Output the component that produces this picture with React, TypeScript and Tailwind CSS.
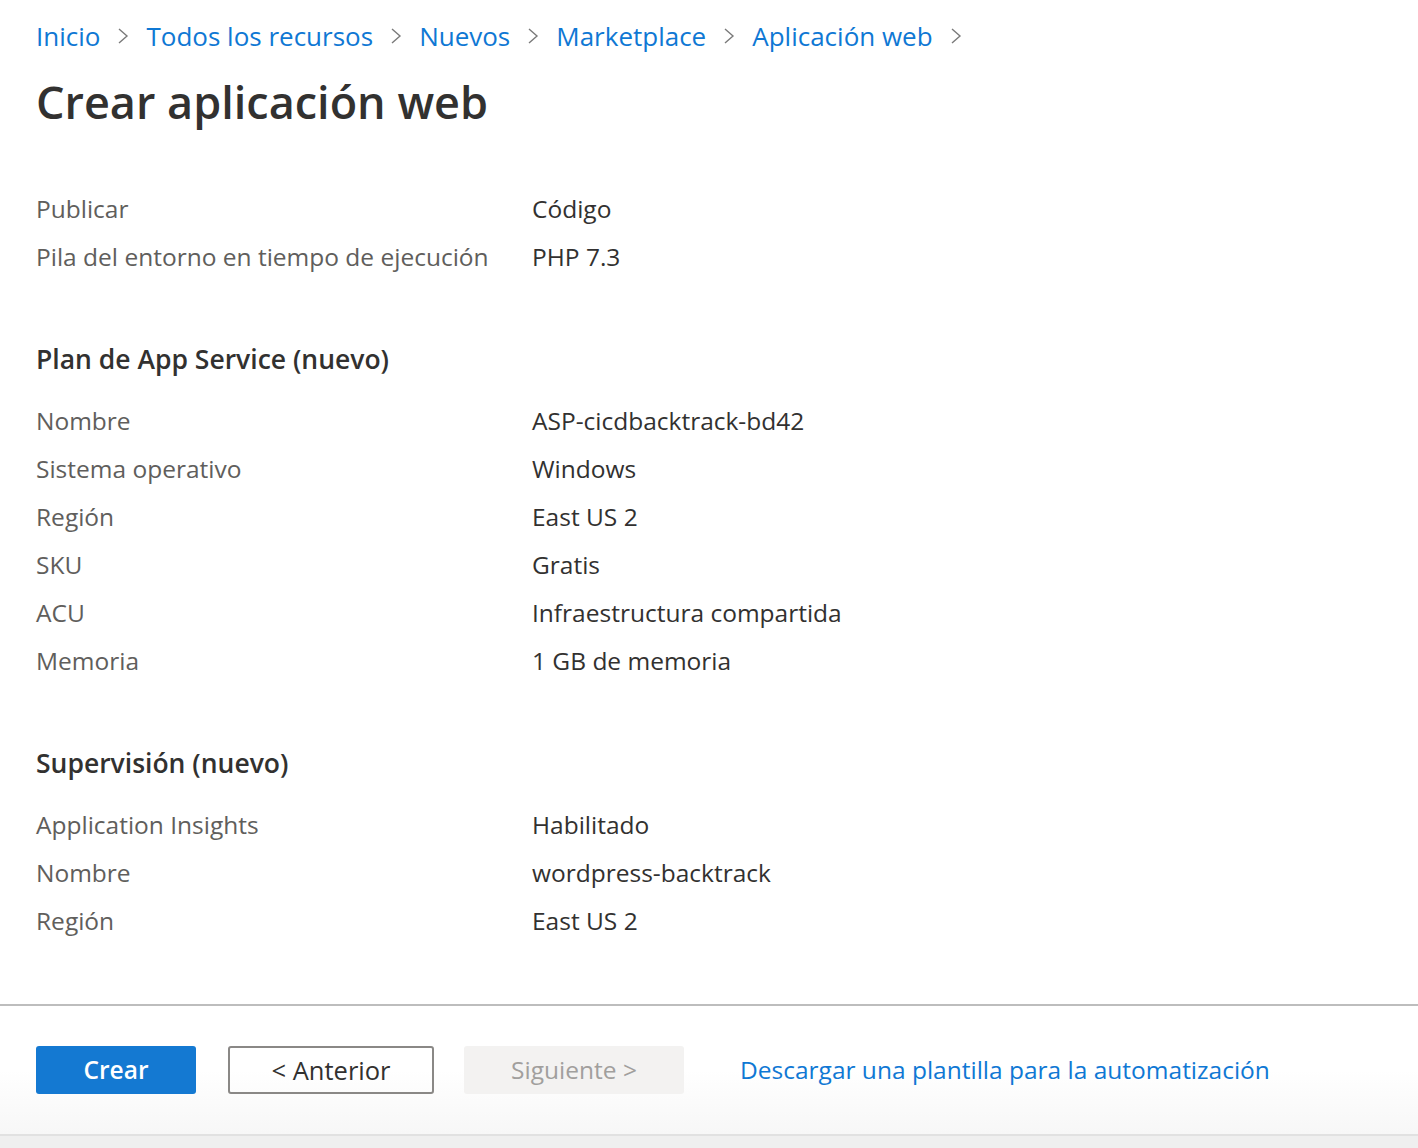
import React from "react";

const Chevron = () => (
  <svg width="12" height="20" viewBox="0 0 12 20" className="shrink-0">
    <path d="M2 3 L10 10 L2 17" fill="none" stroke="#7a7a7a" strokeWidth="1.4" />
  </svg>
);

const crumbs = ["Inicio", "Todos los recursos", "Nuevos", "Marketplace", "Aplicación web"];

const Row = ({ label, value }: { label: string; value: string }) => (
  <div className="flex h-[48px] items-center">
    <div className="w-[496px] text-[#605e5c]">{label}</div>
    <div className="text-[#323130]">{value}</div>
  </div>
);

export default function App() {
  return (
    <div
      className="flex min-h-[1148px] w-full flex-col bg-white text-[24.5px]"
      style={{ fontFamily: '"Open Sans", "Noto Sans", sans-serif' }}
    >
      <div className="flex-1 px-[36px]">
        <div className="flex h-[72px] items-center gap-[17px] text-[26px] text-[#0f78d4]">
          {crumbs.map((c) => (
            <React.Fragment key={c}>
              <span>{c}</span>
              <Chevron />
            </React.Fragment>
          ))}
        </div>
        <h1 className="h-[60px] text-[45px] font-semibold leading-[60px] text-[#323130]">
          Crear aplicación web
        </h1>
        <div className="mt-[53px]">
          <Row label="Publicar" value="Código" />
          <Row label="Pila del entorno en tiempo de ejecución" value="PHP 7.3" />
        </div>
        <div className="mt-[55px] flex h-[48px] items-center text-[26.5px] font-semibold text-[#323130]">
          Plan de App Service (nuevo)
        </div>
        <div className="mt-[13px]">
          <Row label="Nombre" value="ASP-cicdbacktrack-bd42" />
          <Row label="Sistema operativo" value="Windows" />
          <Row label="Región" value="East US 2" />
          <Row label="SKU" value="Gratis" />
          <Row label="ACU" value="Infraestructura compartida" />
          <Row label="Memoria" value="1 GB de memoria" />
        </div>
        <div className="mt-[55px] flex h-[48px] items-center text-[26.5px] font-semibold text-[#323130]">
          Supervisión (nuevo)
        </div>
        <div className="mt-[13px]">
          <Row label="Application Insights" value="Habilitado" />
          <Row label="Nombre" value="wordpress-backtrack" />
          <Row label="Región" value="East US 2" />
        </div>
        <div className="h-[59px]" />
      </div>
      <div className="border-t-2 border-[#bdbdbd] bg-gradient-to-b from-white from-50% to-[#f7f7f7]">
        <div className="flex h-[128px] items-start px-[36px] pt-[40px]">
          <button className="flex h-[48px] w-[160px] items-center justify-center rounded-[3px] bg-[#1479d2] font-semibold text-white">
            Crear
          </button>
          <button className="ml-[32px] flex h-[48px] w-[206px] items-center justify-center rounded-[3px] border-2 border-[#8a8886] text-[25.5px] text-[#323130]">
            &lt; Anterior
          </button>
          <button className="ml-[30px] flex h-[48px] w-[220px] items-center justify-center rounded-[3px] bg-[#f3f2f1] text-[#a19f9d]">
            Siguiente &gt;
          </button>
          <a className="ml-[56px] flex h-[48px] items-center text-[#0f78d4]">
            Descargar una plantilla para la automatización
          </a>
        </div>
      </div>
      <div className="h-[14px] border-t-2 border-[#e1e1e1] bg-[#efefef]" />
    </div>
  );
}
